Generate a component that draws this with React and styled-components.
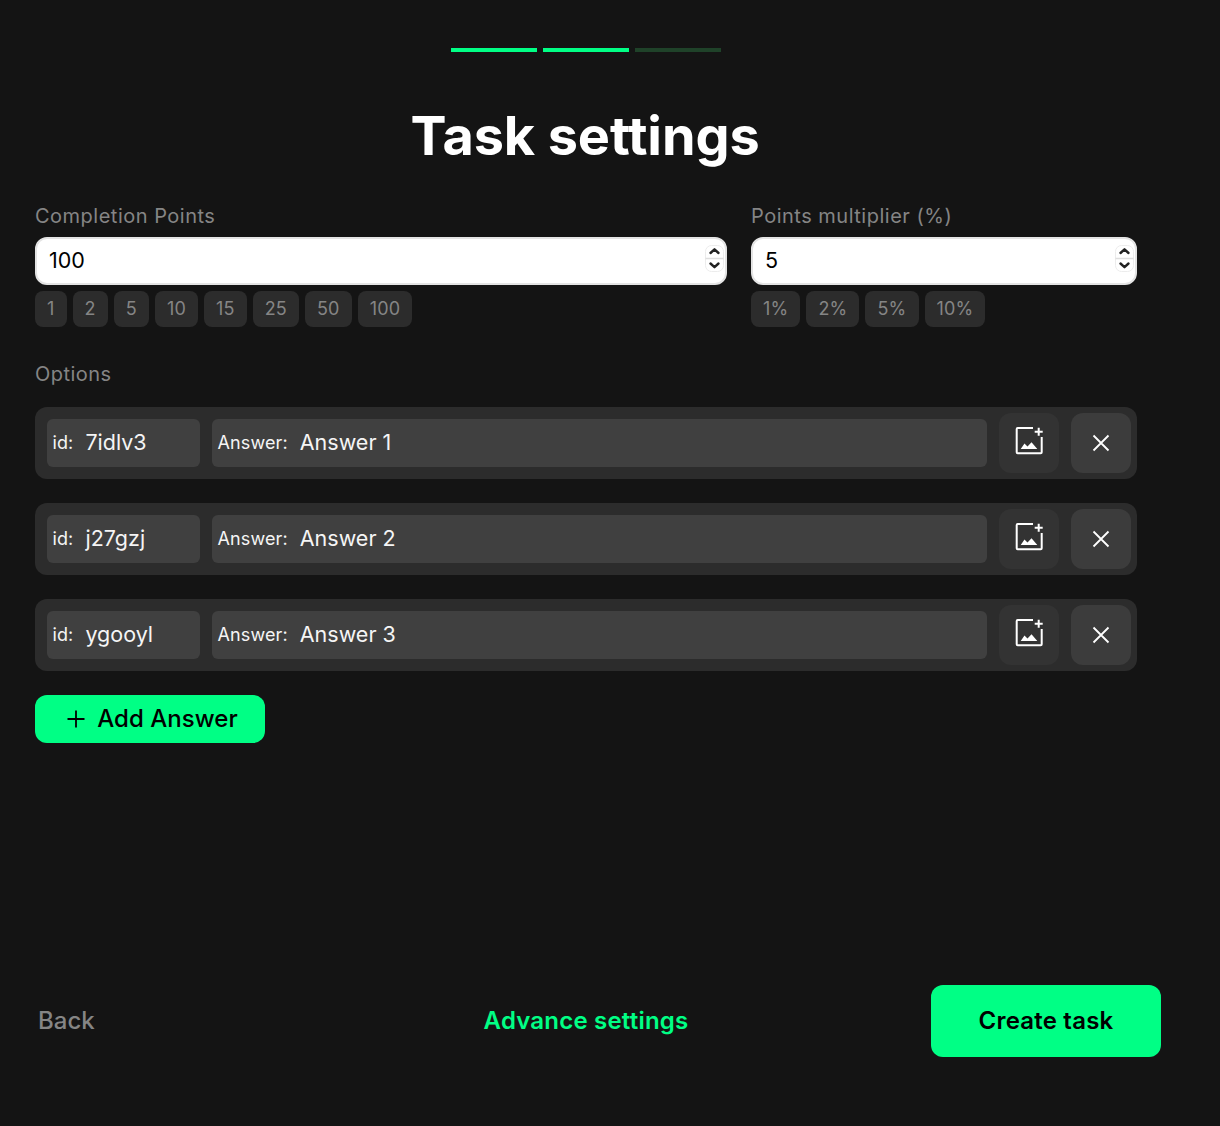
import React from "react";
import styled, { createGlobalStyle } from "styled-components";

const Global = createGlobalStyle`
  html, body { margin: 0; padding: 0; background: #141414; }
  body { font-family: Inter, "Liberation Sans", sans-serif; }
  * { box-sizing: border-box; }
  input[type=number]::-webkit-inner-spin-button,
  input[type=number]::-webkit-outer-spin-button { -webkit-appearance: none; margin: 0; }
`;

const Page = styled.div`
  width: 1150px;
  height: 1126px;
  margin-left: 11px;
  display: flex;
  flex-direction: column;
`;
const Progress = styled.div`
  display: flex;
  justify-content: center;
  gap: 6px;
  padding-top: 48px;
`;
const Step = styled.div`
  width: 86px;
  height: 4px;
  background: ${(p) => (p.$active ? "#00ff85" : "#1f4229")};
`;
const Title = styled.h1`
  margin: 0;
  padding: 51px 2px 0 0;
  height: 153px;
  font-size: 54px;
  line-height: 66px;
  font-weight: 700;
  color: #fff;
  text-align: center;
  letter-spacing: -0.1px;
`;
const Content = styled.div`
  flex: 1;
  padding: 0 24px;
  display: flex;
  flex-direction: column;
`;
const Fields = styled.div`
  display: grid;
  grid-template-columns: 692px 386px;
  gap: 24px;
`;
const Field = styled.div`
  display: flex;
  flex-direction: column;
`;
const Label = styled.label`
  font-size: 20px;
  line-height: 22px;
  height: 32px;
  color: #858585;
  letter-spacing: 0.5px;
`;
const InputWrap = styled.div`
  position: relative;
  height: 48px;
`;
const NumberInput = styled.input`
  width: 100%;
  height: 48px;
  border: 2px solid #e4e4e4;
  border-radius: 12px;
  background: #fff;
  padding: 0 12px 2px;
  font: 400 21.5px Inter, sans-serif;
  color: #000;
  outline: none;
`;
const Spinner = styled.svg`
  position: absolute;
  right: 3px;
  top: 8px;
  width: 19px;
  height: 27px;
`;
const Chips = styled.div`
  display: flex;
  gap: 6px;
  margin-top: 6px;
`;
const Chip = styled.button`
  height: 36px;
  padding: 0 12px 2px;
  border: 0;
  border-radius: 8px;
  background: #2c2c2c;
  color: #858585;
  font: 400 18px Inter, sans-serif;
  letter-spacing: 0.2px;
`;
const OptionsLabel = styled.div`
  margin-top: 35px;
  font-size: 20px;
  line-height: 24px;
  color: #858585;
  letter-spacing: 0.45px;
  margin-bottom: 21px;
`;
const Rows = styled.div`
  display: flex;
  flex-direction: column;
  gap: 24px;
`;
const Row = styled.div`
  height: 72px;
  background: #2c2c2c;
  border-radius: 12px;
  padding: 0 6px 0 12px;
  display: flex;
  align-items: center;
  gap: 12px;
`;
const Cell = styled.div`
  height: 48px;
  background: #404040;
  border-radius: 6px;
  padding: 0 0 2px 5.5px;
  display: flex;
  align-items: center;
  width: ${(p) => (p.$grow ? "auto" : "153px")};
  flex: ${(p) => (p.$grow ? "1" : "none")};
`;
const CellLabel = styled.span`
  font-size: 18px;
  color: #f5f5f5;
  margin-right: 12px;
  letter-spacing: 0.12px;
`;
const CellValue = styled.span`
  font-size: 21.5px;
  color: #f5f5f5;
`;
const IconButton = styled.button`
  width: 60px;
  height: 60px;
  border: 0;
  border-radius: 12px;
  background: ${(p) => (p.$strong ? "#3c3c3c" : "#333333")};
  display: flex;
  align-items: center;
  justify-content: center;
  padding: 0;
`;
const AddButton = styled.button`
  margin-top: 24px;
  width: 230px;
  height: 48px;
  border: 0;
  border-radius: 12px;
  background: #00ff85;
  color: #000;
  font: 500 24px Inter, sans-serif;
  letter-spacing: 0.05px;
  display: flex;
  align-items: center;
  justify-content: center;
  gap: 12px;
  padding: 0 0 0 5px;
`;
const AddText = styled.span`
  margin-bottom: 2px;
`;
const Footer = styled.div`
  height: 72px;
  margin-bottom: 69px;
  display: grid;
  grid-template-columns: 1fr auto 1fr;
  align-items: center;
`;
const Back = styled.button`
  justify-self: start;
  margin-left: 27px;
  padding: 0 0 2px;
  border: 0;
  background: none;
  color: #858585;
  font: 500 24px Inter, sans-serif;
`;
const Advance = styled.button`
  padding: 0 0 2px;
  border: 0;
  background: none;
  color: #00ff85;
  font: 600 24px Inter, sans-serif;
  letter-spacing: 0.2px;
`;
const Create = styled.button`
  justify-self: end;
  width: 230px;
  height: 72px;
  border: 0;
  border-radius: 12px;
  background: #00ff85;
  color: #000;
  font: 600 24px Inter, sans-serif;
  letter-spacing: 0.2px;
  padding: 0 0 2px;
`;

const Spin = () => (
  <Spinner viewBox="0 0 19 27" fill="none">
    <rect x="0.5" y="0.5" width="18" height="26" rx="6" fill="#fff" stroke="#ececec" />
    <path d="M0.5 13.500H18.500" stroke="#dedede" strokeWidth="1.500" />
    <path d="M5.500 8L9.500 4.300L13.500 8" stroke="#222" strokeWidth="2.400" strokeLinecap="round" strokeLinejoin="round" />
    <path d="M5.500 18.500L9.500 22.200L13.500 18.500" stroke="#222" strokeWidth="2.400" strokeLinecap="round" strokeLinejoin="round" />
  </Spinner>
);

const ImageIcon = () => (
  <svg width="32" height="32" viewBox="0 0 32 32" fill="none">
    <path d="M20 1H4.700C4.100 1 3.700 1.400 3.700 2V25.300C3.700 25.900 4.100 26.300 4.700 26.300H27.700C28.300 26.300 28.700 25.900 28.700 25.300V10" stroke="#fff" strokeWidth="2" />
    <path d="M25.700 0.700V8.700M21.700 4.700H29.700" stroke="#fff" strokeWidth="2" />
    <path d="M7.700 22L11.500 16.500L14.500 19.500L18.500 15.200L24.300 22H7.700Z" fill="#fff" />
  </svg>
);

const CloseIcon = () => (
  <svg width="18" height="18" viewBox="0 0 18 18" fill="none">
    <path d="M1.500 1.500L16.500 16.500M16.500 1.500L1.500 16.500" stroke="#fff" strokeWidth="1.800" />
  </svg>
);

const PlusIcon = () => (
  <svg width="18" height="18" viewBox="0 0 18 18" fill="none">
    <path d="M9 0.500V17.500M0.500 9H17.500" stroke="#000" strokeWidth="1.800" />
  </svg>
);

const options = [
  { id: "7idlv3", answer: "Answer 1" },
  { id: "j27gzj", answer: "Answer 2" },
  { id: "ygooyl", answer: "Answer 3" },
];

export default function App() {
  return (
    <Page>
      <Global />
      <Progress>
        <Step $active />
        <Step $active />
        <Step />
      </Progress>
      <Title>Task settings</Title>
      <Content>
        <Fields>
          <Field>
            <Label>Completion Points</Label>
            <InputWrap>
              <NumberInput type="number" defaultValue="100" />
              <Spin />
            </InputWrap>
            <Chips>
              {["1", "2", "5", "10", "15", "25", "50", "100"].map((v) => (
                <Chip key={v}>{v}</Chip>
              ))}
            </Chips>
          </Field>
          <Field>
            <Label>Points multiplier (%)</Label>
            <InputWrap>
              <NumberInput type="number" defaultValue="5" />
              <Spin />
            </InputWrap>
            <Chips>
              {["1%", "2%", "5%", "10%"].map((v) => (
                <Chip key={v}>{v}</Chip>
              ))}
            </Chips>
          </Field>
        </Fields>
        <OptionsLabel>Options</OptionsLabel>
        <Rows>
          {options.map((o) => (
            <Row key={o.id}>
              <Cell>
                <CellLabel>id:</CellLabel>
                <CellValue>{o.id}</CellValue>
              </Cell>
              <Cell $grow>
                <CellLabel>Answer:</CellLabel>
                <CellValue>{o.answer}</CellValue>
              </Cell>
              <IconButton><ImageIcon /></IconButton>
              <IconButton $strong><CloseIcon /></IconButton>
            </Row>
          ))}
        </Rows>
        <AddButton><PlusIcon /><AddText>Add Answer</AddText></AddButton>
      </Content>
      <Footer>
        <Back>Back</Back>
        <Advance>Advance settings</Advance>
        <Create>Create task</Create>
      </Footer>
    </Page>
  );
}
